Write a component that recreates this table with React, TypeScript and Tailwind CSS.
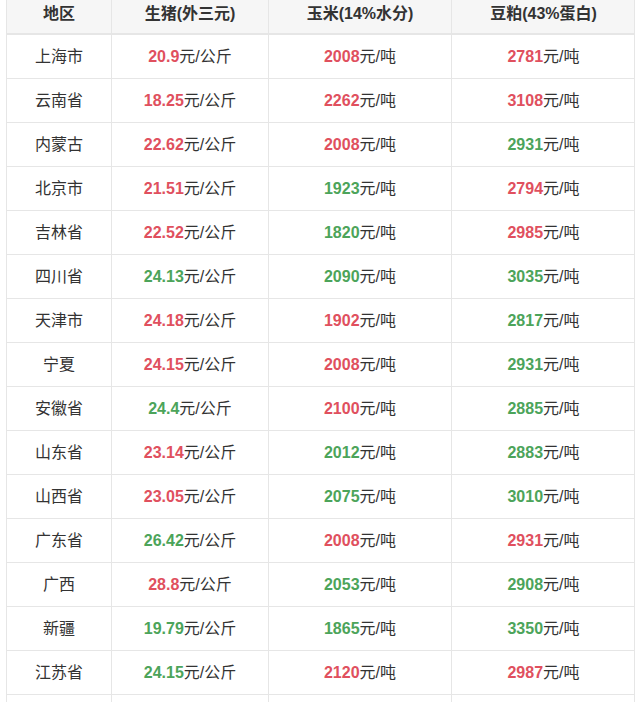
import React from "react";

type Tone = "r" | "g";

interface Row {
  region: string;
  pork: [string, Tone];
  corn: [string, Tone];
  soy: [string, Tone];
}

const rows: Row[] = [
  { region: "上海市", pork: ["20.9", "r"], corn: ["2008", "r"], soy: ["2781", "r"] },
  { region: "云南省", pork: ["18.25", "r"], corn: ["2262", "r"], soy: ["3108", "r"] },
  { region: "内蒙古", pork: ["22.62", "r"], corn: ["2008", "r"], soy: ["2931", "g"] },
  { region: "北京市", pork: ["21.51", "r"], corn: ["1923", "g"], soy: ["2794", "r"] },
  { region: "吉林省", pork: ["22.52", "r"], corn: ["1820", "g"], soy: ["2985", "r"] },
  { region: "四川省", pork: ["24.13", "g"], corn: ["2090", "g"], soy: ["3035", "g"] },
  { region: "天津市", pork: ["24.18", "r"], corn: ["1902", "r"], soy: ["2817", "g"] },
  { region: "宁夏", pork: ["24.15", "r"], corn: ["2008", "r"], soy: ["2931", "g"] },
  { region: "安徽省", pork: ["24.4", "g"], corn: ["2100", "r"], soy: ["2885", "g"] },
  { region: "山东省", pork: ["23.14", "r"], corn: ["2012", "g"], soy: ["2883", "g"] },
  { region: "山西省", pork: ["23.05", "r"], corn: ["2075", "g"], soy: ["3010", "g"] },
  { region: "广东省", pork: ["26.42", "g"], corn: ["2008", "r"], soy: ["2931", "r"] },
  { region: "广西", pork: ["28.8", "r"], corn: ["2053", "g"], soy: ["2908", "g"] },
  { region: "新疆", pork: ["19.79", "g"], corn: ["1865", "g"], soy: ["3350", "g"] },
  { region: "江苏省", pork: ["24.15", "g"], corn: ["2120", "r"], soy: ["2987", "r"] },
];

const cols = "grid grid-cols-[105px_157px_183px_183px]";
const cell = "flex items-center justify-center border-r border-[#e6e6e6] last:border-r-0";

function Price({ v, unit }: { v: [string, Tone]; unit: string }) {
  return (
    <span>
      <b className={v[1] === "r" ? "text-[#e0505e]" : "text-[#4ca45a]"}>{v[0]}</b>
      {unit}
    </span>
  );
}

export default function App() {
  return (
    <div
      className="bg-white w-[640px] h-[702px] overflow-hidden pl-[6px] text-[16px] text-[#333]"
      style={{ fontFamily: '"Liberation Sans", "Noto Sans CJK SC", sans-serif' }}
    >
      <div className="w-[629px] border-l border-r border-[#e6e6e6]">
        <div className={`${cols} h-[35px] bg-[#f6f6f6] border-b-2 border-[#e6e6e6] font-bold`}>
          <div className={`${cell} pb-[6px]`}>地区</div>
          <div className={`${cell} pb-[6px]`}>生猪(外三元)</div>
          <div className={`${cell} pb-[6px]`}>玉米(14%水分)</div>
          <div className={`${cell} pb-[6px]`}>豆粕(43%蛋白)</div>
        </div>
        {rows.map((r) => (
          <div key={r.region} className={`${cols} h-[44px] border-b border-[#e6e6e6]`}>
            <div className={cell}>{r.region}</div>
            <div className={cell}>
              <Price v={r.pork} unit="元/公斤" />
            </div>
            <div className={cell}>
              <Price v={r.corn} unit="元/吨" />
            </div>
            <div className={cell}>
              <Price v={r.soy} unit="元/吨" />
            </div>
          </div>
        ))}
        <div className={`${cols} h-[44px]`}>
          <div className={cell} />
          <div className={cell} />
          <div className={cell} />
          <div className={cell} />
        </div>
      </div>
    </div>
  );
}
